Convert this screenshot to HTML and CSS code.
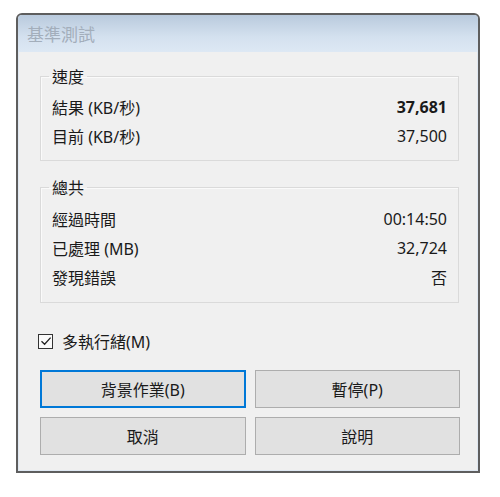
FILE: index.html
```html
<!DOCTYPE html>
<html>
<head>
<meta charset="utf-8">
<link rel="stylesheet" href="styles.css">
</head>
<body>
<div class="window">
  <div class="titlebar"><span class="title">基準測試</span></div>
  <div class="content">
    <fieldset class="group g1">
      <legend>速度</legend>
      <div class="row"><span>結果 (KB/秒)</span><span class="val bold">37,681</span></div>
      <div class="row"><span>目前 (KB/秒)</span><span class="val">37,500</span></div>
    </fieldset>
    <fieldset class="group g2">
      <legend>總共</legend>
      <div class="row"><span>經過時間</span><span class="val">00:14:50</span></div>
      <div class="row"><span>已處理 (MB)</span><span class="val">32,724</span></div>
      <div class="row"><span>發現錯誤</span><span class="val">否</span></div>
    </fieldset>
    <label class="check">
      <span class="box"><svg width="12" height="12" viewBox="0 0 12 12"><path d="M1.5 6.2 L4.6 9.3 L10.6 2.6" fill="none" stroke="#222" stroke-width="1.3"/></svg></span>
      <span>多執行緒(M)</span>
    </label>
    <div class="buttons">
      <button class="btn focus">背景作業(B)</button>
      <button class="btn">暫停(P)</button>
      <button class="btn">取消</button>
      <button class="btn">說明</button>
    </div>
  </div>
</div>
</body>
</html>
```

FILE: styles.css
```css
html, body {
  margin: 0;
  padding: 0;
  background: #ffffff;
}
body {
  font-family: "Noto Sans", "Noto Sans CJK TC", sans-serif;
  font-size: 16px;
  color: #1a1a1a;
}
.window {
  margin: 13px 0 0 16px;
  width: 464px;
  height: 460px;
  box-sizing: border-box;
  border: 2px solid #5e5e5e;
  border-radius: 6px 6px 0 0;
  background: #f0f0f0;
  box-shadow: inset 1px 0 0 #dfe8f2, inset -1px 0 0 #dfe8f2, inset 0 -1px 0 #dfe8f2;
  display: flex;
  flex-direction: column;
  overflow: hidden;
}
.titlebar {
  height: 37px;
  flex: none;
  background: linear-gradient(#b9cadd, #d4e1ef 60%, #dde8f4);
  display: flex;
  align-items: center;
  padding-left: 9px;
  box-sizing: border-box;
}
.title {
  color: #a3aebb;
  font-size: 17px;
  font-family: "Noto Sans CJK TC", sans-serif;
}
.content {
  padding: 14px 19px 0 22px;
  display: flex;
  flex-direction: column;
}
.group {
  margin: 0;
  border: 1px solid #dadada;
  box-shadow: inset 1px 1px 0 #fafafa;
  padding: 6px 11px 10px 11px;
  min-width: 0;
}
.g2 {
  margin-top: 16px;
  padding-top: 7px;
  padding-bottom: 11px;
}
legend {
  padding: 0 3px;
  margin-left: -3px;
  line-height: 20px;
  height: 20px;
  font-family: "Noto Sans CJK TC", sans-serif;
}
.row {
  display: flex;
  justify-content: space-between;
  align-items: center;
  height: 29px;
}
.bold {
  font-weight: bold;
}
.check {
  display: flex;
  align-items: center;
  gap: 9px;
  margin-top: 28px;
  height: 20px;
  margin-left: -2px;
}
.box {
  width: 13px;
  height: 13px;
  border: 1px solid #333;
  background: #fafafa;
  display: flex;
  align-items: center;
  justify-content: center;
}
.buttons {
  display: grid;
  grid-template-columns: 1fr 1fr;
  column-gap: 9px;
  row-gap: 9px;
  margin-top: 19px;
  margin-right: -1px;
}
.btn {
  height: 38px;
  border: 1px solid #adadad;
  background: #e1e1e1;
  font-family: "Noto Sans", "Noto Sans CJK TC", sans-serif;
  font-size: 16px;
  color: #1a1a1a;
  padding: 0;
}
.btn.focus {
  border: 2px solid #0078d7;
}
```
